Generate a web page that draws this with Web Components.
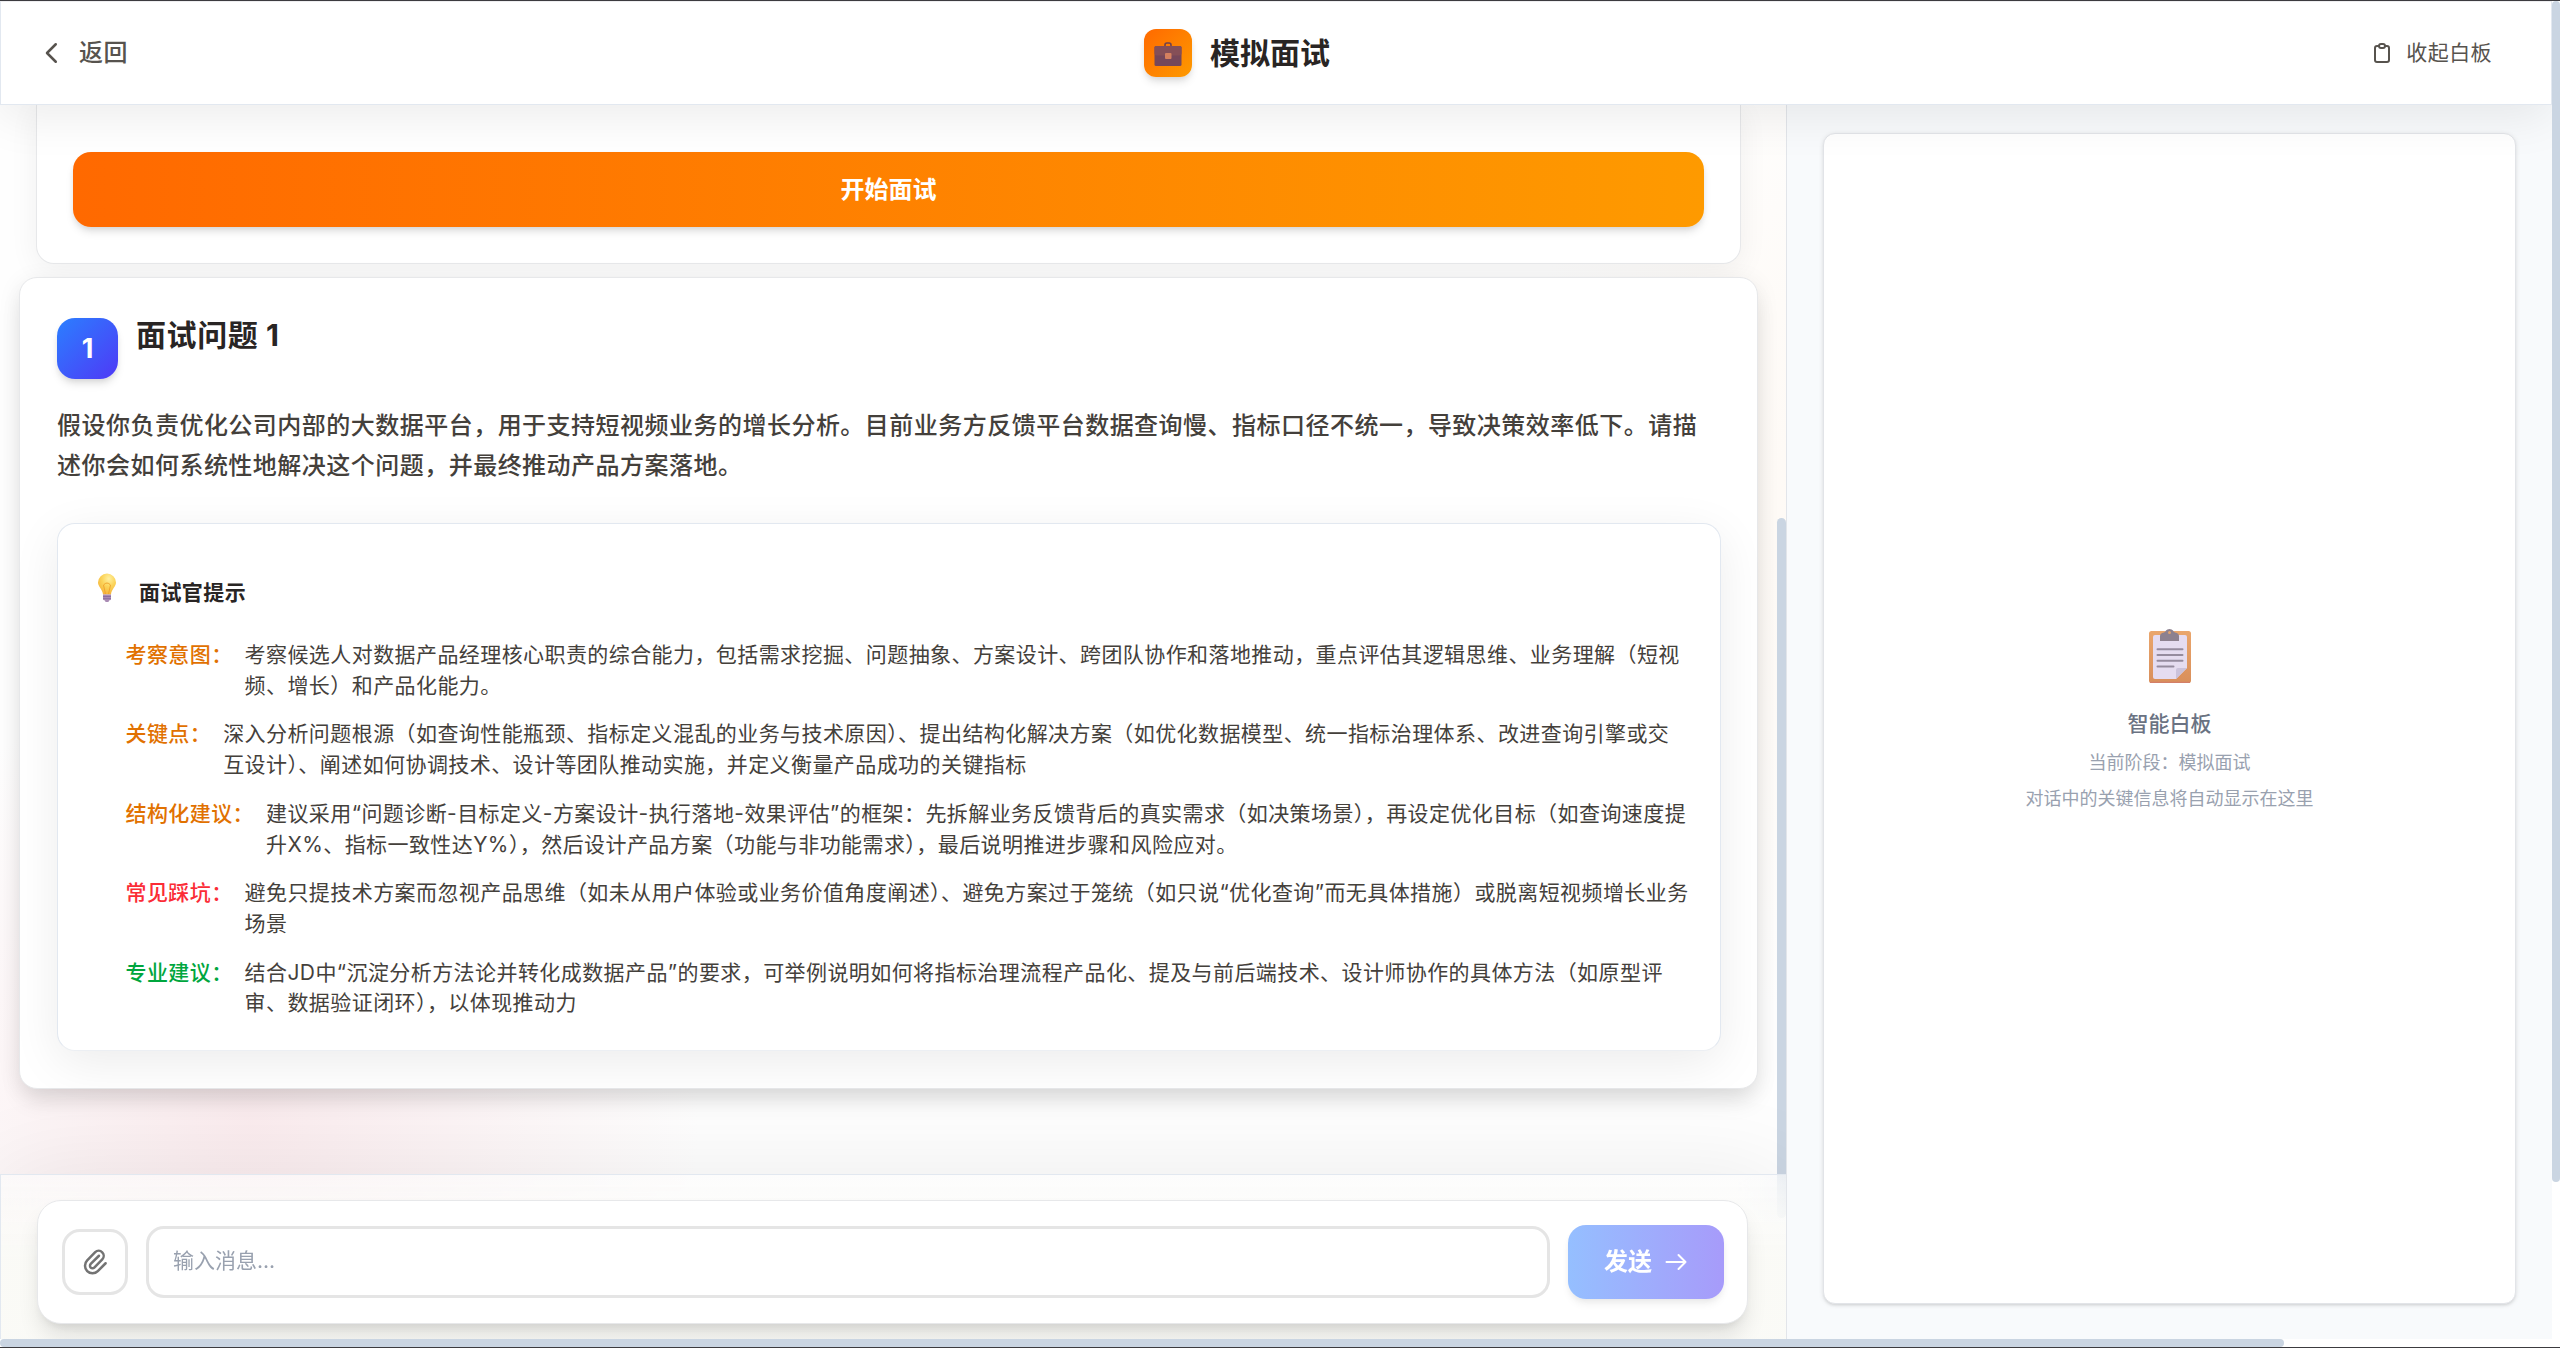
<!DOCTYPE html>
<html lang="zh-CN">
<head>
<meta charset="utf-8">
<title>模拟面试</title>
<style>
html, body {
    margin: 0;
    padding: 0;
    overflow: hidden;
}

body {
    width: 2560px;
    height: 1348px;
    font-family: Inter, "Noto Sans CJK SC", sans-serif;
    color: #292524;
}
</style>
</head>
<body>
<interview-app></interview-app>

<script>
// no "*" margin reset here, it would beat the :host rules of nested elements
const base = `
div, svg, button {
    box-sizing: border-box;
}
p, h2, h3 {
    margin: 0;
}
svg {
    display: block;
    flex: none;
}
`

const tips = [
    {
        label: '考察意图：',
        color: '#e17100',
        text: '考察候选人对数据产品经理核心职责的综合能力，包括需求挖掘、问题抽象、方案设计、跨团队协作和落地推动，重点评估其逻辑思维、业务理解（短视<br>频、增长）和产品化能力。'
    },
    {
        label: '关键点：',
        color: '#e17100',
        text: '深入分析问题根源（如查询性能瓶颈、指标定义混乱的业务与技术原因）、提出结构化解决方案（如优化数据模型、统一指标治理体系、改进查询引擎或交<br>互设计）、阐述如何协调技术、设计等团队推动实施，并定义衡量产品成功的关键指标'
    },
    {
        label: '结构化建议：',
        color: '#e17100',
        text: '建议采用“问题诊断-目标定义-方案设计-执行落地-效果评估”的框架：先拆解业务反馈背后的真实需求（如决策场景），再设定优化目标（如查询速度提<br>升X%、指标一致性达Y%），然后设计产品方案（功能与非功能需求），最后说明推进步骤和风险应对。'
    },
    {
        label: '常见踩坑：',
        color: '#fb2c36',
        text: '避免只提技术方案而忽视产品思维（如未从用户体验或业务价值角度阐述）、避免方案过于笼统（如只说“优化查询”而无具体措施）或脱离短视频增长业务<br>场景'
    },
    {
        label: '专业建议：',
        color: '#00a63e',
        text: '结合JD中“沉淀分析方法论并转化成数据产品”的要求，可举例说明如何将指标治理流程产品化、提及与前后端技术、设计师协作的具体方法（如原型评<br>审、数据验证闭环），以体现推动力'
    }
]

function define(name, css, html) {
    customElements.define(name, class extends HTMLElement {
        constructor() {
            super()
            this.attachShadow({ mode: 'open' })
        }

        connectedCallback() {
            this.shadowRoot.innerHTML = `<style>${base}${css}</style>${html}`
        }
    })
}

define('app-header', `
:host {
    display: grid;
    grid-template-columns: 1107px auto 1fr;
    align-items: center;
    box-sizing: border-box;
    height: 104px;
    padding: 0 59px 0 36px;
    background: rgba(255,255,255,.92);
    border: 1px solid #e2e8f0;
    border-top-color: #eeeef0;
    box-shadow: 0 12px 48px rgba(0,0,0,.08);
    position: relative;
    z-index: 5;
}
span {
    padding-bottom: 5px;
}
.back, .toggle {
    display: flex;
    align-items: center;
    color: #57534e;
    letter-spacing: 0.02em;
}
.back {
    font-size: 24px;
    font-weight: 500;
    gap: 12px;
}
.toggle {
    justify-self: end;
    font-size: 21px;
    gap: 12px;
}
.brand {
    display: flex;
    align-items: center;
    gap: 18px;
    font-size: 30px;
    font-weight: 700;
}
.logo {
    width: 48px;
    height: 48px;
    display: grid;
    place-items: center;
    border-radius: 12px;
    background: linear-gradient(135deg, #ff6900, #fe9a00);
    box-shadow: 0 6px 9px -1px rgba(0,0,0,.1), 0 3px 6px -2px rgba(0,0,0,.1);
}
`, `
<div class="back">
    <svg width="30" height="30" viewBox="0 0 24 24" fill="none" stroke="currentColor" stroke-width="2" stroke-linecap="round" stroke-linejoin="round"><path d="M15 19l-7-7 7-7"/></svg>
    <span>返回</span>
</div>
<div class="brand">
    <div class="logo">
        <svg width="28" height="28" viewBox="0 0 28 28">
            <path d="M11 7.500V6Q11 4 13 4h2q2 0 2 2v1.500" fill="none" stroke="#70404c" stroke-width="1.600"/>
            <rect x=".5" y="7" width="27" height="20" rx="1.500" fill="#75475a"/>
            <path d="M.5 8.500Q.5 7 2 7h24q1.500 0 1.500 1.500V14q0 2.500-2.500 2.500H3Q.5 16.500.5 14z" fill="#854f57"/>
            <rect x="11" y="14" width="6.500" height="6" rx="1" fill="#d5805f"/>
        </svg>
    </div>
    <span>模拟面试</span>
</div>
<div class="toggle">
    <svg width="24" height="24" viewBox="0 0 24 24" fill="none" stroke="currentColor" stroke-width="2" stroke-linecap="round" stroke-linejoin="round"><path d="M9 5H7a2 2 0 00-2 2v12a2 2 0 002 2h10a2 2 0 002-2V7a2 2 0 00-2-2h-2M9 5a2 2 0 002 2h2a2 2 0 002-2M9 5a2 2 0 012-2h2a2 2 0 012 2"/></svg>
    <span>收起白板</span>
</div>`)

define('start-card', `
:host {
    display: block;
    box-sizing: border-box;
    height: 159px;
    margin: 0 45px 0 36px;
    padding: 47px 36px 0;
    background: #fff;
    border: 1px solid #e7e8ea;
    border-top: 0;
    border-radius: 0 0 18px 18px;
    box-shadow: 0 6px 30px rgba(0,0,0,.06);
}
button {
    display: block;
    width: 100%;
    height: 75px;
    padding: 0 0 5px;
    border: 0;
    border-radius: 18px;
    background: linear-gradient(90deg, #ff6900, #fe9a00);
    box-shadow: 0 6px 9px -1px rgba(0,0,0,.1), 0 3px 6px -2px rgba(0,0,0,.1);
    color: #fff;
    font: inherit;
    font-size: 24px;
    font-weight: 600;
}
`, `<button>开始面试</button>`)

define('tip-row', `
:host {
    display: flex;
    gap: 12px;
    font-size: 21px;
    letter-spacing: 0.02em;
    line-height: 30.7px;
    color: #44403b;
    white-space: nowrap;
}
.label {
    font-weight: 500;
    color: var(--label);
}
`, `<span class="label"><slot name="label"></slot></span><p><slot></slot></p>`)

define('tip-card', `
:host {
    display: block;
    box-sizing: border-box;
    height: 528px;
    padding: 49px 0 0 36px;
    background: #fff;
    border: 1px solid #e2e8f0;
    border-bottom-color: #eceff3;
    border-radius: 18px;
    box-shadow: 0 12px 48px rgba(0,0,0,.08);
}
.title {
    display: flex;
    gap: 20px;
    padding-left: 1px;
    font-size: 21px;
    font-weight: 600;
    letter-spacing: 0.02em;
    line-height: 30px;
    margin-bottom: 32px;
}
.title span {
    padding-top: 5px;
}
.rows {
    display: flex;
    flex-direction: column;
    gap: 18px;
    padding-left: 31.5px;
}
`, `
<div class="title">
    <svg width="24" height="30" viewBox="0 0 24 30">
        <defs><radialGradient id="g" cx=".6" cy=".25" r=".75"><stop offset="0" stop-color="#fff0a0"/><stop offset=".5" stop-color="#fbd45a"/><stop offset="1" stop-color="#f5b43b"/></radialGradient></defs>
        <path d="M12 0.500a9 9 0 0 0-9 9c0 4.200 4.500 6.500 5 12h8c.5-5.500 5-7.800 5-12a9 9 0 0 0-9-9z" fill="url(#g)"/>
        <path d="M10.500 21l-2-9q3.500-4 7 0l-2 9" fill="none" stroke="#f0a52e" stroke-width="1"/>
        <path d="M8 21.500h8v5q-1 1-2 1l-.5 1.500h-3L10 27.500q-1 0-2-1z" fill="#a98bb4"/>
        <path d="M8 23.500h8M8 25.700h8" stroke="#84679a" stroke-width=".8"/>
    </svg>
    <span>面试官提示</span>
</div>
<div class="rows">
${tips.map(t => `<tip-row style="--label: ${t.color}"><span slot="label">${t.label}</span>${t.text}</tip-row>`).join('')}
</div>`)

define('question-card', `
:host {
    display: block;
    box-sizing: border-box;
    height: 812px;
    margin: 13px 28px 0 19px;
    padding: 40px 36px 0 37px;
    background: #fff;
    border: 1px solid #e7e8ea;
    border-radius: 18px;
    box-shadow: 0 15px 23px -4px rgba(0,0,0,.1), 0 4px 24px rgba(0,0,0,.07);
}
.head {
    display: flex;
    gap: 18px;
}
.num {
    width: 61px;
    height: 61px;
    display: grid;
    place-items: center;
    border-radius: 18px;
    background: linear-gradient(135deg, #2b7fff, #4f39f6);
    box-shadow: 0 6px 9px -1px rgba(0,0,0,.1), 0 3px 6px -2px rgba(0,0,0,.1);
    color: #fff;
    font-size: 27px;
    font-weight: 700;
}
h2 {
    margin-top: -1px;
    font-size: 30px;
    font-weight: 700;
    line-height: 36px;
    letter-spacing: 0.02em;
}
.question {
    margin: 27px 0 37px;
    font-size: 24px;
    font-weight: 500;
    letter-spacing: 0.02em;
    line-height: 40px;
    color: #44403b;
    white-space: nowrap;
}
`, `
<div class="head">
    <div class="num">1</div>
    <h2><slot name="title"></slot></h2>
</div>
<p class="question"><slot></slot></p>
<tip-card></tip-card>`)

define('message-bar', `
:host {
    display: block;
    box-sizing: border-box;
    height: 165px;
    padding: 25px 38px 0 36px;
    background: linear-gradient(rgba(251,251,251,.6), rgba(250,250,246,.95) 50%);
    backdrop-filter: blur(18px);
    border-top: 1px solid #e2e8f0;
    border-left: 1px solid #e2e8f0;
    box-shadow: 0 0 96px rgba(0,0,0,.08);
    position: relative;
}
.box {
    display: flex;
    align-items: center;
    gap: 18px;
    height: 124px;
    padding: 0 23px 0 24px;
    background: #fff;
    border: 1px solid #e7e8ea;
    border-radius: 24px;
    box-shadow: 0 15px 23px -4px rgba(0,0,0,.12), 0 6px 9px -4px rgba(0,0,0,.08);
}
.attach, .field {
    border: 3px solid #e5e5e5;
    border-radius: 18px;
    background: #fff;
}
.attach {
    width: 66px;
    height: 66px;
    display: grid;
    place-items: center;
    color: #737373;
}
.field {
    flex: 1;
    height: 72px;
    display: flex;
    align-items: center;
    padding: 0 24px 6px;
    font-size: 21px;
    color: #99a1af;
}
.send {
    width: 156px;
    height: 74px;
    display: flex;
    align-items: center;
    justify-content: center;
    gap: 12px;
    border-radius: 18px;
    background: linear-gradient(90deg, #95bfff, #a79bfa);
    box-shadow: 0 6px 9px -1px rgba(0,0,0,.06), 0 3px 6px -2px rgba(0,0,0,.06);
    color: #fff;
    font-size: 24px;
    font-weight: 600;
}
.send span {
    padding-bottom: 5px;
}
`, `
<div class="box">
    <div class="attach"><svg width="30" height="30" viewBox="0 0 24 24" fill="none" stroke="currentColor" stroke-width="2" stroke-linecap="round" stroke-linejoin="round"><path d="M15.172 7l-6.586 6.586a2 2 0 102.828 2.828l6.414-6.586a4 4 0 00-5.656-5.656l-6.415 6.585a6 6 0 108.486 8.486L20.500 13"/></svg></div>
    <div class="field">输入消息...</div>
    <div class="send"><span>发送</span><svg width="24" height="24" viewBox="0 0 24 24" fill="none" stroke="currentColor" stroke-width="2" stroke-linecap="round" stroke-linejoin="round"><path d="M2.500 12h19M14.500 5l7 7-7 7"/></svg></div>
</div>`)

define('white-board', `
:host {
    display: flex;
    box-sizing: border-box;
    padding: 28px 36px 35px;
    background: #f8fafc;
    border-left: 1px solid #e2e5ea;
}
.panel {
    flex: 1;
    display: flex;
    flex-direction: column;
    align-items: center;
    background: #fff;
    border: 1px solid #e2e4e8;
    border-radius: 12px;
    box-shadow: 0 1px 5px rgba(0,0,0,.1), 0 2px 3px -1px rgba(0,0,0,.1);
    padding-top: 494px;
    color: #99a1af;
    font-size: 18px;
    text-align: center;
}
h3 {
    margin: 24px 0 9px;
    font-size: 21px;
    line-height: 32px;
    font-weight: 500;
    color: #6a7282;
}
p {
    line-height: 27px;
    margin-bottom: 9px;
}
`, `
<div class="panel">
    <svg width="44" height="56" viewBox="0 0 44 56">
        <defs><linearGradient id="b" x1="0" y1="0" x2="0" y2="1"><stop offset="0" stop-color="#eaa66c"/><stop offset="1" stop-color="#d98f5b"/></linearGradient></defs>
        <rect x="1" y="3" width="42" height="52" rx="2.500" fill="url(#b)"/>
        <path d="M2 54.300h40" stroke="#d47f68" stroke-width="1.200"/>
        <path d="M7 7h30q2 0 2 2v31L28 51H7q-2 0-2-2V9q0-2 2-2z" fill="#e5dcf0"/>
        <path d="M28 51V42q0-2 2-2h9z" fill="#cbc2db"/>
        <path d="M12 13V8q0-3 4-3.500 1.500-.5 2-2 1-1.500 3.500-1.500T25 2.500q.5 1.500 2 2 4 .5 4 3.500v5z" fill="#8d818f"/>
        <circle cx="21.500" cy="4.500" r="1.500" fill="#e0a36f"/>
        <path d="M9.500 21.300h25M9.500 27h25M9.500 32.700h25M9.500 38.400h16" stroke="#958b9e" stroke-width="2" stroke-linecap="round"/>
    </svg>
    <h3>智能白板</h3>
    <p>当前阶段：模拟面试</p>
    <p>对话中的关键信息将自动显示在这里</p>
</div>`)

define('interview-app', `
:host {
    display: grid;
    grid-template-columns: 2552px 8px;
    grid-template-rows: 1338px 8px;
    width: 2560px;
    height: 1348px;
    box-sizing: border-box;
    border-top: 1px solid #3c3b3f;
    border-bottom: 1px solid #3c3b3f;
    background: #fff;
    overflow: hidden;
}
.page {
    display: flex;
    flex-direction: column;
    overflow: hidden;
    background:
        radial-gradient(circle at 250px 1120px, rgba(245,208,214,.4), rgba(245,208,214,0) 450px),
        radial-gradient(circle at 2048px 520px, rgba(255,235,215,.4), rgba(255,235,215,0) 560px),
        #fefefe;
}
.main {
    flex: 1;
    min-height: 0;
    display: grid;
    grid-template-columns: 1786px 1fr;
}
.chat {
    display: flex;
    flex-direction: column;
    min-width: 0;
    overflow: hidden;
}
.scroll {
    height: 1069px;
    flex: none;
    position: relative;
}
.bar {
    position: absolute;
    right: 0;
    top: 413px;
    width: 9px;
    height: 700px;
    border-radius: 5px;
    background: #cad5e2;
}
.v {
    height: 1181px;
    border-radius: 4px;
    background: #cad5e2;
}
.h {
    width: 2284px;
    border-radius: 4px;
    background: #cad5e2;
}
`, `
<div class="page">
    <app-header></app-header>
    <div class="main">
        <div class="chat">
            <div class="scroll">
                <start-card></start-card>
                <question-card>
                    <span slot="title">面试问题 1</span>
                    假设你负责优化公司内部的大数据平台，用于支持短视频业务的增长分析。目前业务方反馈平台数据查询慢、指标口径不统一，导致决策效率低下。请描<br>述你会如何系统性地解决这个问题，并最终推动产品方案落地。
                </question-card>
                <div class="bar"></div>
            </div>
            <message-bar></message-bar>
        </div>
        <white-board></white-board>
    </div>
</div>
<div class="v"></div>
<div class="h"></div>`)
</script>
</body>
</html>
